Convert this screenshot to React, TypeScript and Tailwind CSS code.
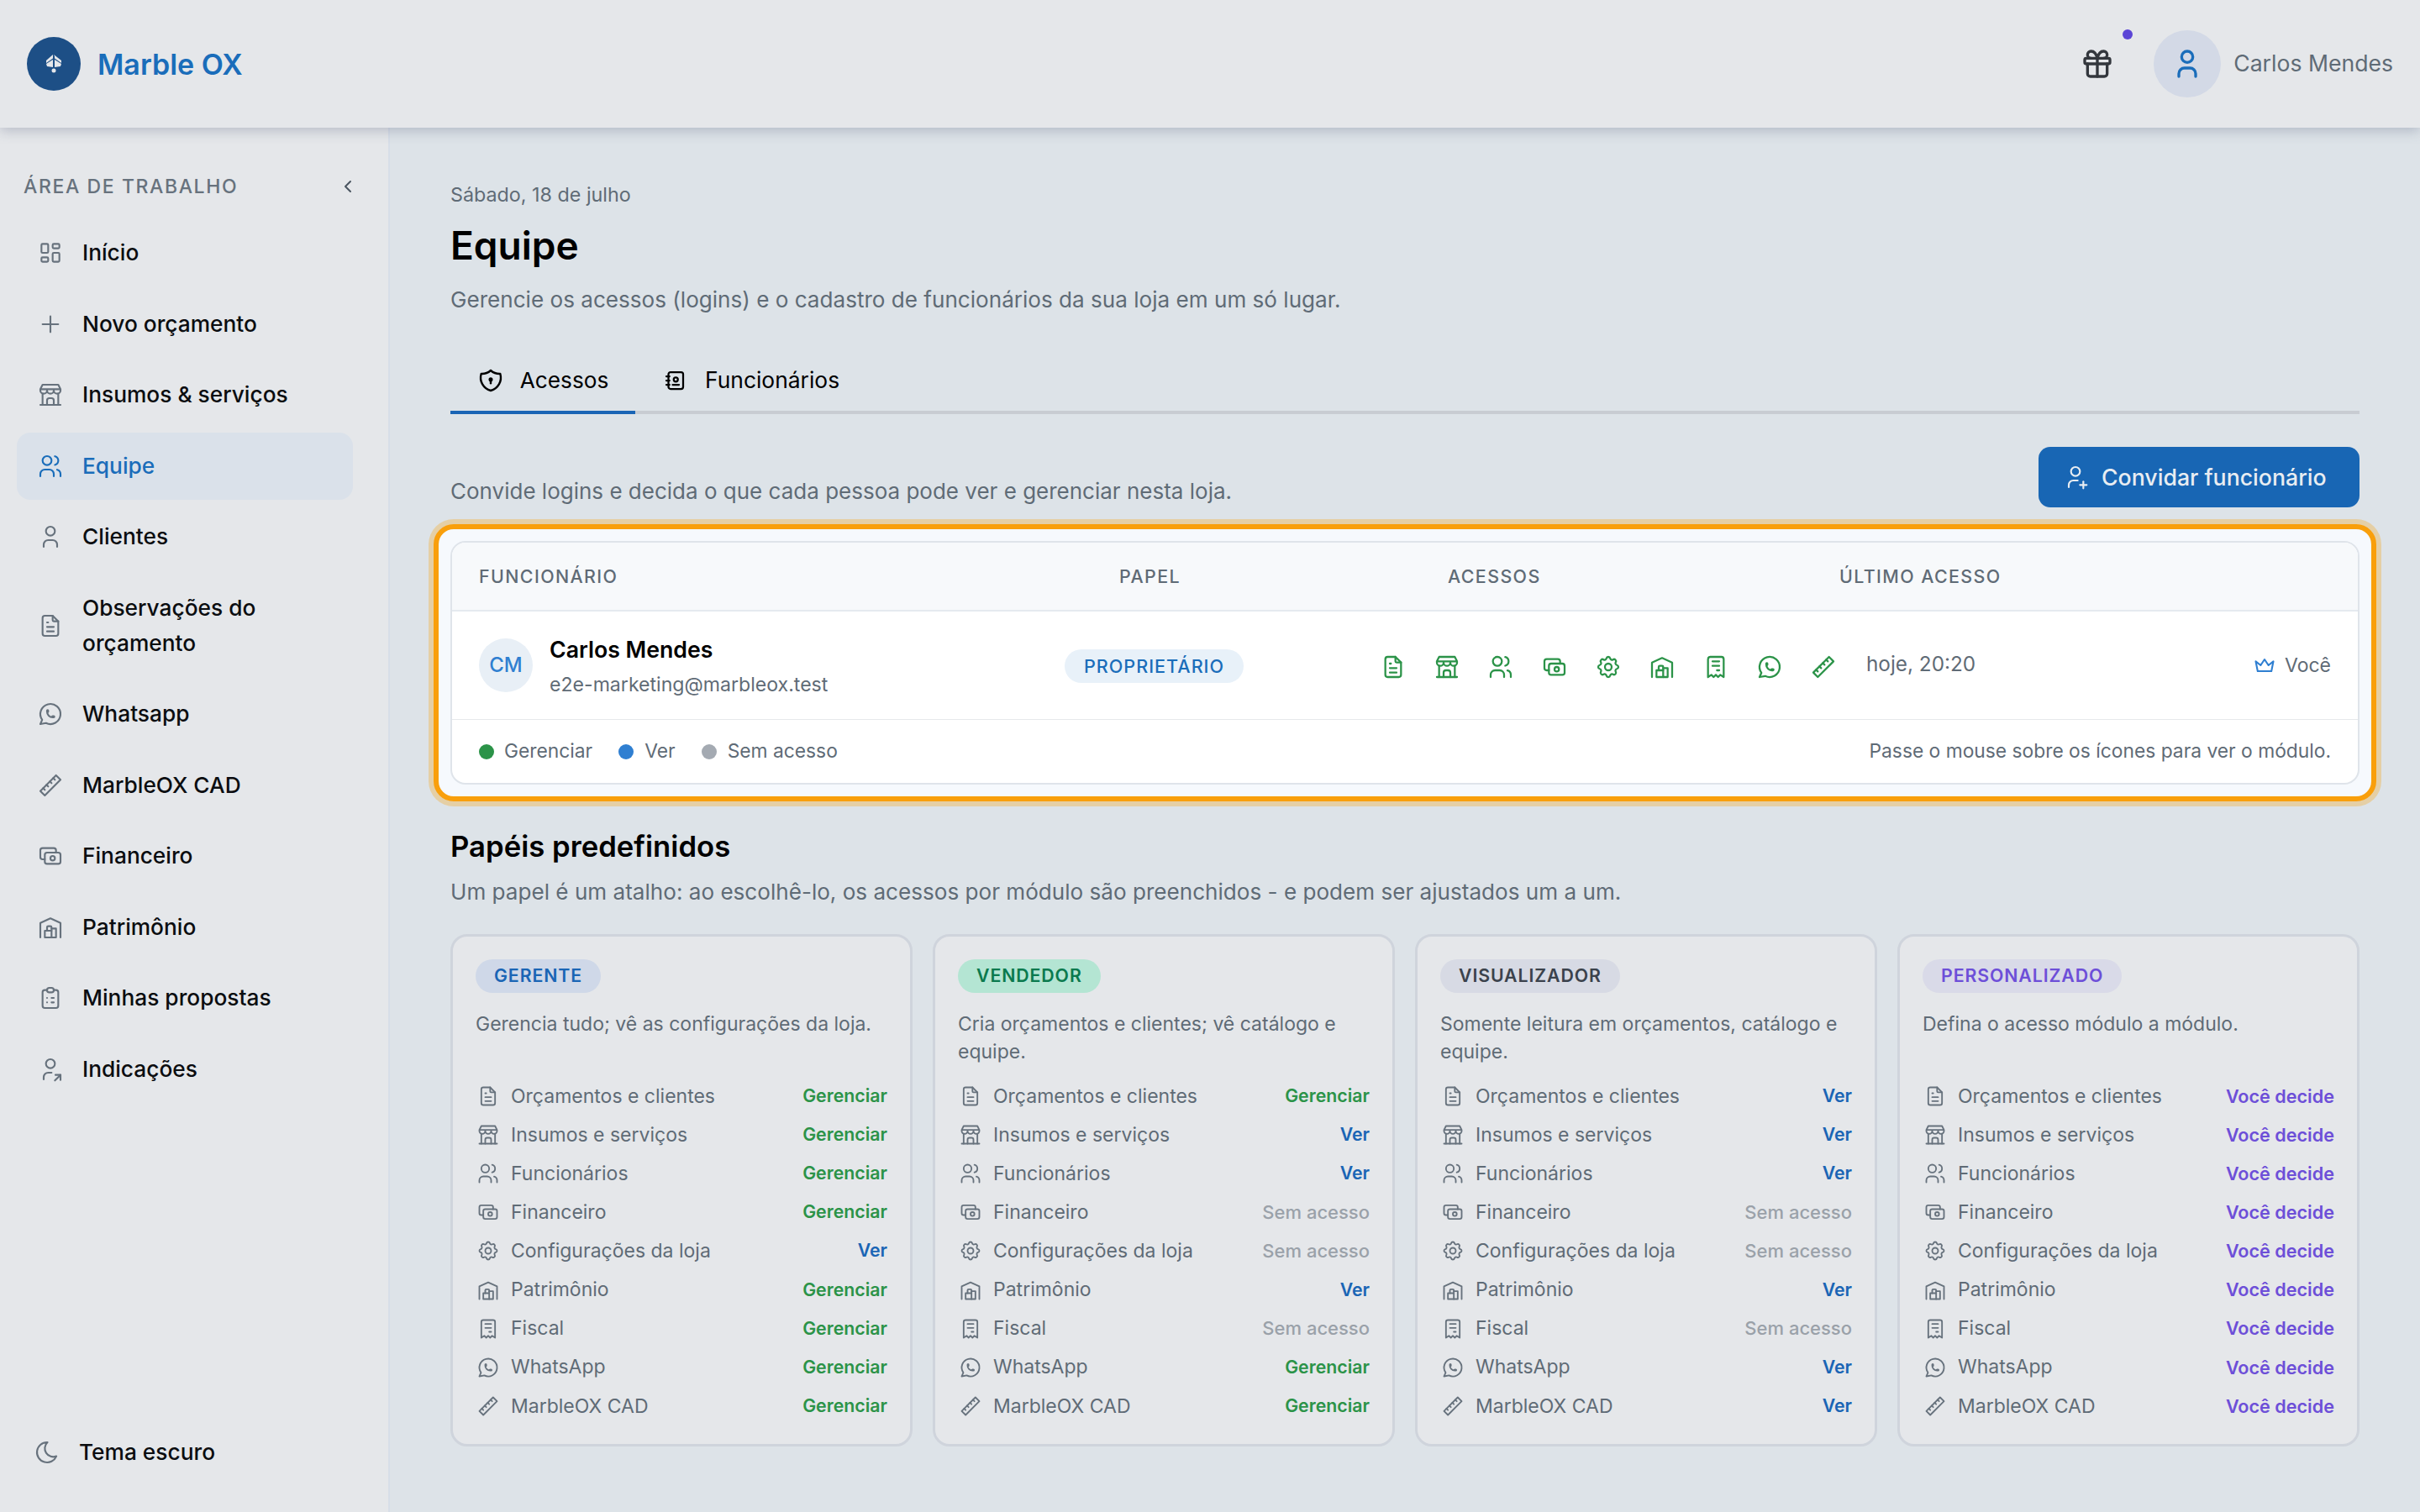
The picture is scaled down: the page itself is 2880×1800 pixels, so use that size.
import React from "react";
import {
  TbLayoutDashboard, TbPlus, TbBuildingStore, TbUsers, TbUser, TbFileText, TbBrandWhatsapp, TbRuler2, TbCash,
  TbBuildingWarehouse, TbClipboardList, TbUserShare, TbMoon, TbChevronLeft, TbGift, TbShieldLock, TbAddressBook,
  TbUserPlus, TbCrown, TbSettings, TbReceipt,
} from "react-icons/tb";

const nav: [React.ComponentType<any>, string, boolean?][] = [
  [TbLayoutDashboard, "Início"],
  [TbPlus, "Novo orçamento"],
  [TbBuildingStore, "Insumos & serviços"],
  [TbUsers, "Equipe", true],
  [TbUser, "Clientes"],
  [TbFileText, "Observações do orçamento"],
  [TbBrandWhatsapp, "Whatsapp"],
  [TbRuler2, "MarbleOX CAD"],
  [TbCash, "Financeiro"],
  [TbBuildingWarehouse, "Patrimônio"],
  [TbClipboardList, "Minhas propostas"],
  [TbUserShare, "Indicações"],
];

const modules: [React.ComponentType<any>, string][] = [
  [TbFileText, "Orçamentos e clientes"],
  [TbBuildingStore, "Insumos e serviços"],
  [TbUsers, "Funcionários"],
  [TbCash, "Financeiro"],
  [TbSettings, "Configurações da loja"],
  [TbBuildingWarehouse, "Patrimônio"],
  [TbReceipt, "Fiscal"],
  [TbBrandWhatsapp, "WhatsApp"],
  [TbRuler2, "MarbleOX CAD"],
];

const G = "Gerenciar", V = "Ver", S = "Sem acesso", D = "Você decide";
const roles = [
  { name: "GERENTE", badge: "bg-[#cfd8e8] text-[#1a65b5]", desc: "Gerencia tudo; vê as configurações da loja.", perms: [G, G, G, G, V, G, G, G, G] },
  { name: "VENDEDOR", badge: "bg-[#b4e5d3] text-[#0b7a4e]", desc: "Cria orçamentos e clientes; vê catálogo e equipe.", perms: [G, V, V, S, S, V, S, G, G] },
  { name: "VISUALIZADOR", badge: "bg-[#d7dae4] text-[#3b424c]", desc: "Somente leitura em orçamentos, catálogo e equipe.", perms: [V, V, V, S, S, V, S, V, V] },
  { name: "PERSONALIZADO", badge: "bg-[#d9dae8] text-[#6d4fd8]", desc: "Defina o acesso módulo a módulo.", perms: [D, D, D, D, D, D, D, D, D] },
];

const permClass: Record<string, string> = {
  [G]: "text-[21.3px] text-[#2b9348] font-semibold",
  [V]: "text-[21.3px] text-[#1a65b5] font-semibold",
  [S]: "text-[22px] text-[#9aa1a9] font-medium",
  [D]: "text-[21.6px] text-[#6d4fd8] font-semibold",
};

function RoleCard({ role }: { role: (typeof roles)[number] }) {
  return (
    <div className="rounded-[20px] border-[3px] border-[#cfd4dc] bg-[#e5e7ea] pt-[27px] pb-[22px] px-[27px]">
      <span className={`inline-flex h-[40px] items-center rounded-full px-[22px] text-[21.3px] font-semibold tracking-[0.9px] ${role.badge}`}>{role.name}</span>
      <p className="mt-[21px] h-[66px] text-[23px] leading-[33px] text-[#5f6b76]">{role.desc}</p>
      <div className="mt-[13px] flex flex-col">
        {modules.map(([Icon, label], i) => (
          <div key={label} className="flex h-[46.1px] items-center">
            <Icon size={28} strokeWidth={1.6} className="ml-[1px] mr-[13px] shrink-0 text-[#67727d]" />
            <span className="flex-1 text-[23px] text-[#5f6b76]">{label}</span>
            <span className={permClass[role.perms[i]]}>{role.perms[i]}</span>
          </div>
        ))}
      </div>
    </div>
  );
}

export default function App() {
  return (
    <div className="flex h-screen flex-col overflow-hidden bg-[#dde3e8] text-black" style={{ fontFamily: "Inter, 'Noto Sans', sans-serif" }}>
      <header className="relative z-10 flex h-[152px] shrink-0 items-center justify-between bg-[#e5e7ea] pl-[32px] pr-[32px] shadow-[0_4px_14px_rgba(70,80,110,0.28)]">
        <div className="flex items-center gap-[20px]">
          <div className="flex h-[64px] w-[64px] items-center justify-center rounded-full bg-[#1d4f86]">
            <svg width="20" height="22" viewBox="0 0 20 22" fill="#e5e7ea">
              <path d="M10 0 L19 7 L19 10 L11 4.5 L11 2 Z M9 0 L1 7 L1 10 L9 4.5 Z" />
              <path d="M9 6 L9 15 L2 14 L1 11 Z M11 6 L11 15 L18 14 L19 11 Z" />
              <circle cx="10" cy="19" r="2.5" />
            </svg>
          </div>
          <span className="text-[34px] font-semibold text-[#1a6dba]">Marble OX</span>
        </div>
        <div className="flex items-center">
          <div className="relative mr-[47px]">
            <TbGift size={40} strokeWidth={2} className="text-[#33373d]" />
            <span className="absolute right-[-22px] top-[-21px] h-[12px] w-[12px] rounded-full bg-[#5b45d6]" />
          </div>
          <div className="flex h-[80px] w-[80px] items-center justify-center rounded-full bg-[#d3d9e6]">
            <TbUser size={40} strokeWidth={2} className="text-[#1a6dba]" />
          </div>
          <span className="ml-[15px] text-[26.6px] text-[#5f6b76]">Carlos Mendes</span>
        </div>
      </header>
      <div className="flex min-h-0 flex-1">
        <aside className="flex w-[464px] shrink-0 flex-col border-r-2 border-[#d7dee8] bg-[#e5e7ea] pl-[20px] pr-[42px]">
          <div className="mt-[53px] mr-[-6px] flex h-[34px] items-center justify-between pl-[8px]">
            <span className="text-[23px] font-medium tracking-[1.6px] text-[#67727d]">ÁREA DE TRABALHO</span>
            <TbChevronLeft size={24} strokeWidth={2} className="text-[#4a5561]" />
          </div>
          <nav className="mt-[22px] flex flex-col gap-[4.5px]">
            {nav.map(([Icon, label, active]) => (
              <a key={label} className={`flex items-center gap-[22px] rounded-[16px] py-[19px] pl-[24px] pr-[24px] text-[26.3px] font-medium leading-[42px] ${active ? "bg-[#dae1ea] text-[#1a6dba]" : "text-[#0b0d10]"}`}>
                <Icon size={32} strokeWidth={1.6} className={`shrink-0 ${active ? "text-[#1a6dba]" : "text-[#67727d]"}`} />
                <span className="max-w-[270px]">{label}</span>
              </a>
            ))}
          </nav>
          <div className="mt-auto mb-[50px] flex items-center gap-[22px] pl-[20px] text-[26.3px] font-medium leading-[42px] text-[#0b0d10]">
            <TbMoon size={32} strokeWidth={1.6} className="text-[#67727d]" />
            <span>Tema escuro</span>
          </div>
        </aside>
        <main className="min-w-0 flex-1 px-[72px] pt-[61px]">
          <p className="text-[23.3px] leading-[38px] text-[#5f6b76]">Sábado, 18 de julho</p>
          <h1 className="mt-[10px] text-[46px] font-semibold leading-[62px]">Equipe</h1>
          <p className="mt-[12px] text-[26.1px] leading-[44px] text-[#5f6b76]">Gerencie os acessos (logins) e o cadastro de funcionários da sua loja em um só lugar.</p>
          <div className="mt-[38px] flex h-[76px] border-b-4 border-[#c8ccd2]">
            <div className="mb-[-4px] flex w-[220px] items-center justify-center gap-[19px] border-b-4 border-[#1a65b5] text-[26.2px]">
              <TbShieldLock size={32} strokeWidth={1.8} />
              <span>Acessos</span>
            </div>
            <div className="flex items-center gap-[21px] px-[32px] text-[26.4px]">
              <TbAddressBook size={30} strokeWidth={1.8} />
              <span>Funcionários</span>
            </div>
          </div>
          <div className="mt-[39px] flex items-end justify-between">
            <p className="mb-[-3px] text-[26px] leading-[44px] text-[#5f6b76]">Convide logins e decida o que cada pessoa pode ver e gerenciar nesta loja.</p>
            <button className="flex h-[72px] w-[382px] items-center gap-[15px] rounded-[14px] bg-[#1866b4] pl-[28px] text-[26.7px] font-medium text-[#e8edf2]">
              <TbUserPlus size={32} strokeWidth={1.6} />
              <span>Convidar funcionário</span>
            </button>
          </div>
          <div className="mx-[-20px] mt-[20px] rounded-[24px] border-[6px] border-[#f99f0b] bg-[#f6f9fd] p-[14px] shadow-[0_0_0_6px_#e5cfa5]">
            <div className="overflow-hidden rounded-[18px] border-2 border-[#dfe4ea] bg-white">
              <div className="flex h-[82px] items-center border-b-2 border-[#e5eaef] bg-[#f7f9fb] text-[21.4px] font-medium tracking-[1.4px] text-[#5f6b76]">
                <span className="ml-[32px] w-[762px]">FUNCIONÁRIO</span>
                <span className="w-[391px]">PAPEL</span>
                <span className="w-[466px]">ACESSOS</span>
                <span>ÚLTIMO ACESSO</span>
              </div>
              <div className="flex h-[129px] items-center border-b border-[#e6e8eb] pl-[32px] pr-[32px]">
                <div className="flex h-[64px] w-[64px] items-center justify-center rounded-full bg-[#e8eff6] text-[24px] font-medium text-[#2f7fd1]">CM</div>
                <div className="ml-[20px] mt-[3px] w-[613px]">
                  <div className="text-[26.7px] font-semibold leading-[40px]">Carlos Mendes</div>
                  <div className="mt-[3px] text-[23.1px] leading-[38px] text-[#5f6b76]">e2e-marketing@marbleox.test</div>
                </div>
                <span className="mt-[2px] flex h-[40px] w-[213px] items-center justify-center rounded-full bg-[#e8f1f9] text-[21.6px] font-medium tracking-[1px] text-[#1a6dba]">PROPRIETÁRIO</span>
                <div className="ml-[162px] mt-[3px] flex w-[576px] gap-[32px] text-[#2b9348]">
                  {modules.map(([Icon, label]) => (
                    <Icon key={label} size={32} strokeWidth={1.7} className="shrink-0" />
                  ))}
                </div>
                <span className="ml-[3px] mt-[-3px] text-[24.3px] text-[#5f6b76]">hoje, 20:20</span>
                <span className="ml-auto flex items-center gap-[10px] text-[23px] text-[#5f6b76]">
                  <TbCrown size={28} strokeWidth={1.8} className="text-[#2f7fd1]" />
                  Você
                </span>
              </div>
              <div className="flex h-[75px] items-center pl-[32px] pr-[32px] text-[22.8px] text-[#5f6b76]">
                <span className="h-[18px] w-[18px] rounded-full bg-[#2b9348]" />
                <span className="ml-[12px]">Gerenciar</span>
                <span className="ml-[31px] h-[18px] w-[18px] rounded-full bg-[#2f7fd1]" />
                <span className="ml-[13px]">Ver</span>
                <span className="ml-[31px] h-[18px] w-[18px] rounded-full bg-[#a4aab2]" />
                <span className="ml-[13px]">Sem acesso</span>
                <span className="ml-auto">Passe o mouse sobre os ícones para ver o módulo.</span>
              </div>
            </div>
          </div>
          <h2 className="mt-[28px] text-[34.7px] font-semibold leading-[50px]">Papéis predefinidos</h2>
          <p className="mt-[9px] text-[26.1px] leading-[42px] text-[#5f6b76]">Um papel é um atalho: ao escolhê-lo, os acessos por módulo são preenchidos - e podem ser ajustados um a um.</p>
          <div className="mt-[29px] grid grid-cols-4 gap-[24px]">
            {roles.map((r) => (
              <RoleCard key={r.name} role={r} />
            ))}
          </div>
        </main>
      </div>
    </div>
  );
}
